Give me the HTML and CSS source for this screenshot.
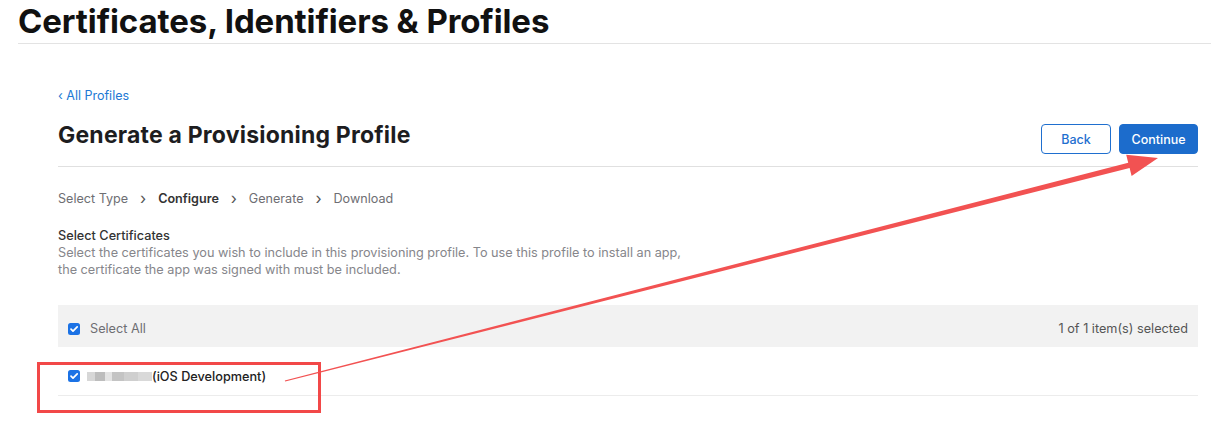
FILE: index.html
```html
<!DOCTYPE html>
<html lang="en">
<head>
<meta charset="utf-8">
<title>Certificates, Identifiers &amp; Profiles</title>
<link rel="stylesheet" href="styles.css">
</head>
<body>
<header class="page-header">
  <h1 class="page-title">Certificates, Identifiers &amp; Profiles</h1>
</header>

<main class="content">
  <a class="back-link" href="#">&lsaquo; All Profiles</a>

  <div class="title-row">
    <h2 class="section-title">Generate a Provisioning Profile</h2>
    <div class="actions">
      <button class="btn btn-secondary" type="button">Back</button>
      <button class="btn btn-primary" type="button">Continue</button>
    </div>
  </div>

  <nav class="steps">
    <span class="step">Select Type</span>
    <span class="chev">&#x203A;</span>
    <span class="step step-current">Configure</span>
    <span class="chev">&#x203A;</span>
    <span class="step">Generate</span>
    <span class="chev">&#x203A;</span>
    <span class="step">Download</span>
  </nav>

  <section class="cert-intro">
    <h3 class="cert-heading">Select Certificates</h3>
    <p class="cert-desc">Select the certificates you wish to include in this provisioning profile. To use this profile to install an app,<br>the certificate the app was signed with must be included.</p>
  </section>

  <div class="cert-table">
    <div class="table-head">
      <label class="check-label">
        <span class="checkbox"><svg viewBox="0 0 12 12" width="12" height="12"><rect width="12" height="12" rx="2.5" fill="#1b72e5"/><path d="M3 6.2 5 8.2 9.2 3.8" fill="none" stroke="#fff" stroke-width="1.7" stroke-linecap="round" stroke-linejoin="round"/></svg></span>
        <span class="select-all">Select All</span>
      </label>
      <span class="count">1 of 1 item(s) selected</span>
    </div>
    <div class="table-row">
      <label class="check-label">
        <span class="checkbox"><svg viewBox="0 0 12 12" width="12" height="12"><rect width="12" height="12" rx="2.5" fill="#1b72e5"/><path d="M3 6.2 5 8.2 9.2 3.8" fill="none" stroke="#fff" stroke-width="1.7" stroke-linecap="round" stroke-linejoin="round"/></svg></span>
        <span class="redacted"><i class="px px-a"></i><i class="px px-b"></i><i class="px px-c"></i><i class="px px-d"></i><i class="px px-e"></i><i class="px px-f"></i></span><span class="cert-name">(iOS Development)</span>
      </label>
    </div>
  </div>
</main>

<!-- annotation layer -->
<div class="mark-box"></div>
<svg class="mark-arrow" width="1211" height="435" viewBox="0 0 1211 435">
  <polygon fill="#f25252" points="284.8,380.5 1128.2,162.7 1126.2,154.8 1158,158 1131.6,176 1129.6,168.1 285.2,381.5"/>
</svg>
</body>
</html>
```

FILE: styles.css
```css
* {
  box-sizing: border-box;
}

body {
  margin: 0;
  background: #fff;
  font-family: Inter, "Noto Sans", "Liberation Sans", sans-serif;
  color: #1d1d1f;
  position: relative;
  width: 1211px;
  height: 435px;
  overflow: hidden;
}

.page-header {
  margin-left: 18px;
  border-bottom: 1px solid #e3e3e3;
  height: 44px;
}

.page-title {
  margin: 0;
  font-size: 33px;
  line-height: 44px;
  font-weight: 700;
  letter-spacing: -0.1px;
  color: #111;
  transform: translateY(-1px);
}

.content {
  margin-left: 58px;
  width: 1140px;
  padding-top: 44px;
}

.back-link {
  display: block;
  font-size: 12.5px;
  line-height: 16px;
  color: #2178d4;
  text-decoration: none;
}

.title-row {
  display: flex;
  align-items: center;
  justify-content: space-between;
  margin-top: 9px;
  height: 41px;
  border-bottom: 1px solid #e0e0e0;
  padding-bottom: 12px;
  box-sizing: content-box;
}

.section-title {
  margin: 0;
  font-size: 23px;
  font-weight: 700;
  line-height: 28px;
  color: #1d1d1f;
  letter-spacing: 0.2px;
  transform: translateY(1px);
}

.actions {
  display: flex;
  gap: 8px;
  align-self: flex-end;
}

.btn {
  font-family: inherit;
  font-size: 12.5px;
  font-weight: 500;
  height: 30px;
  border-radius: 4px;
  cursor: pointer;
}

.btn-secondary {
  width: 70px;
  background: #fff;
  color: #1f6fcf;
  border: 1px solid #1f6fcf;
}

.btn-primary {
  width: 79px;
  background: #1c6ccc;
  color: #fff;
  border: 1px solid #1c6ccc;
}

.steps {
  display: flex;
  align-items: center;
  margin-top: 23px;
  font-size: 12.6px;
  line-height: 18px;
  color: #6e6e73;
}

.chev {
  font-size: 16px;
  width: 30px;
  text-align: center;
  color: #555;
  line-height: 18px;
  transform: translateY(-1px);
}

.step-current {
  font-weight: 600;
  color: #333;
}

.cert-intro {
  margin-top: 19px;
}

.cert-heading {
  margin: 0;
  font-size: 12.7px;
  font-weight: 500;
  line-height: 17px;
  color: #333;
}

.cert-desc {
  margin: 0;
  font-size: 12.7px;
  line-height: 17px;
  color: #86868b;
}

.cert-table {
  margin-top: 27px;
}

.table-head {
  display: flex;
  align-items: center;
  justify-content: space-between;
  height: 42px;
  background: #f2f2f2;
  padding: 5px 10px 0;
  font-size: 12.7px;
  color: #6e6e73;
}

.count {
  color: #555;
}

.check-label {
  display: flex;
  align-items: center;
}

.checkbox {
  display: flex;
  width: 12px;
  height: 12px;
}

.select-all {
  margin-left: 10px;
}

.table-row {
  display: flex;
  align-items: center;
  height: 49px;
  padding: 10px 10px 0;
  border-bottom: 1px solid #ececec;
  font-size: 12.7px;
  color: #1d1d1f;
}

.redacted {
  display: flex;
  align-items: center;
  margin-left: 7px;
  filter: blur(0.6px);
}

.px {
  display: block;
  height: 9px;
}

.px-a { width: 8px; background: #d7d7d7; }
.px-b { width: 10px; background: #bdbdbd; }
.px-c { width: 7px; background: #e4e4e4; }
.px-d { width: 12px; background: #c4c4c4; }
.px-e { width: 14px; background: #cfcfcf; }
.px-f { width: 14px; background: #d9d9d9; }

.cert-name {
  font-weight: 500;
  color: #222;
}

.mark-box {
  position: absolute;
  left: 37px;
  top: 362px;
  width: 284px;
  height: 51px;
  border: 3px solid #f24848;
}

.mark-arrow {
  position: absolute;
  left: 0;
  top: 0;
  pointer-events: none;
}
```
